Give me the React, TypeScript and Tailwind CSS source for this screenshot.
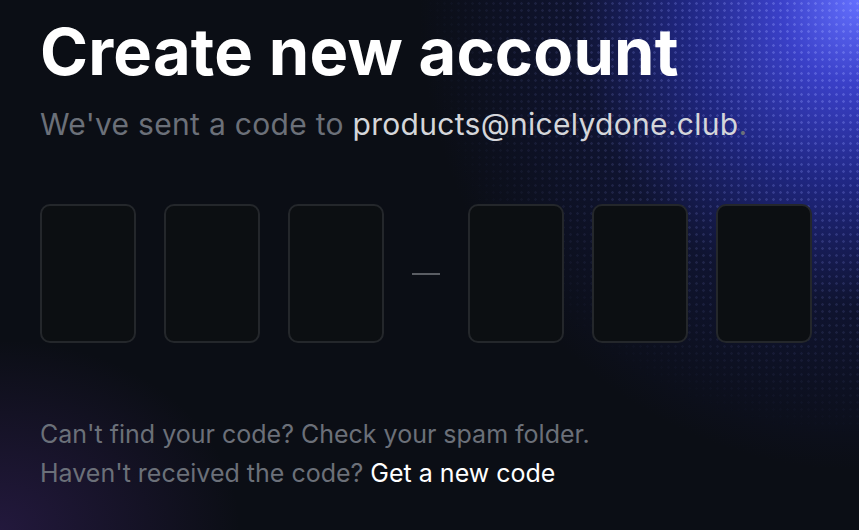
export default function App() {
  const boxes = [0, 1, 2];
  return (
    <div className="relative w-[859px] h-[530px] overflow-hidden bg-[#0b0e15] bg-[radial-gradient(ellipse_440px_470px_at_100%_0%,#6470ff_0%,#3a40c8_18%,#1f2680_40%,rgba(20,26,80,0.45)_65%,transparent_100%),radial-gradient(ellipse_240px_190px_at_0%_100%,rgba(70,40,120,0.4)_0%,transparent_100%)] font-['Inter',sans-serif] before:content-[''] before:absolute before:inset-0 before:bg-[radial-gradient(rgba(150,160,255,0.4)_1.2px,transparent_1.5px)] before:bg-[length:7px_7px] before:[mask-image:radial-gradient(ellipse_440px_440px_at_100%_0%,black_0%,transparent_100%)]">
      <div className="relative px-10 pt-[14px]">
        <h1 className="text-[65px] leading-[76px] font-bold tracking-[0.2px] text-white">
          Create new account
        </h1>
        <p className="mt-4 text-[30px] leading-9 tracking-[0.3px] text-[#6b7079]">
          We've sent a code to <span className="text-[#d4d6da]">products@nicelydone.club</span>.
        </p>
        <div className="mt-[62px] flex items-center gap-7">
          {boxes.map((i) => (
            <div key={"a" + i} className="w-24 h-[139px] rounded-[10px] border-2 border-[#24272b] bg-[#0c0f12]" />
          ))}
          <div className="w-7 h-[2px] bg-[#5a5d63]" />
          {boxes.map((i) => (
            <div key={"b" + i} className="w-24 h-[139px] rounded-[10px] border-2 border-[#24272b] bg-[#0c0f12]" />
          ))}
        </div>
        <div className="mt-[72px] text-[25px] leading-[39px] text-[#6b7079]">
          <p>Can't find your code? Check your spam folder.</p>
          <p>
            Haven't received the code? <span className="text-white">Get a new code</span>
          </p>
        </div>
      </div>
    </div>
  );
}
